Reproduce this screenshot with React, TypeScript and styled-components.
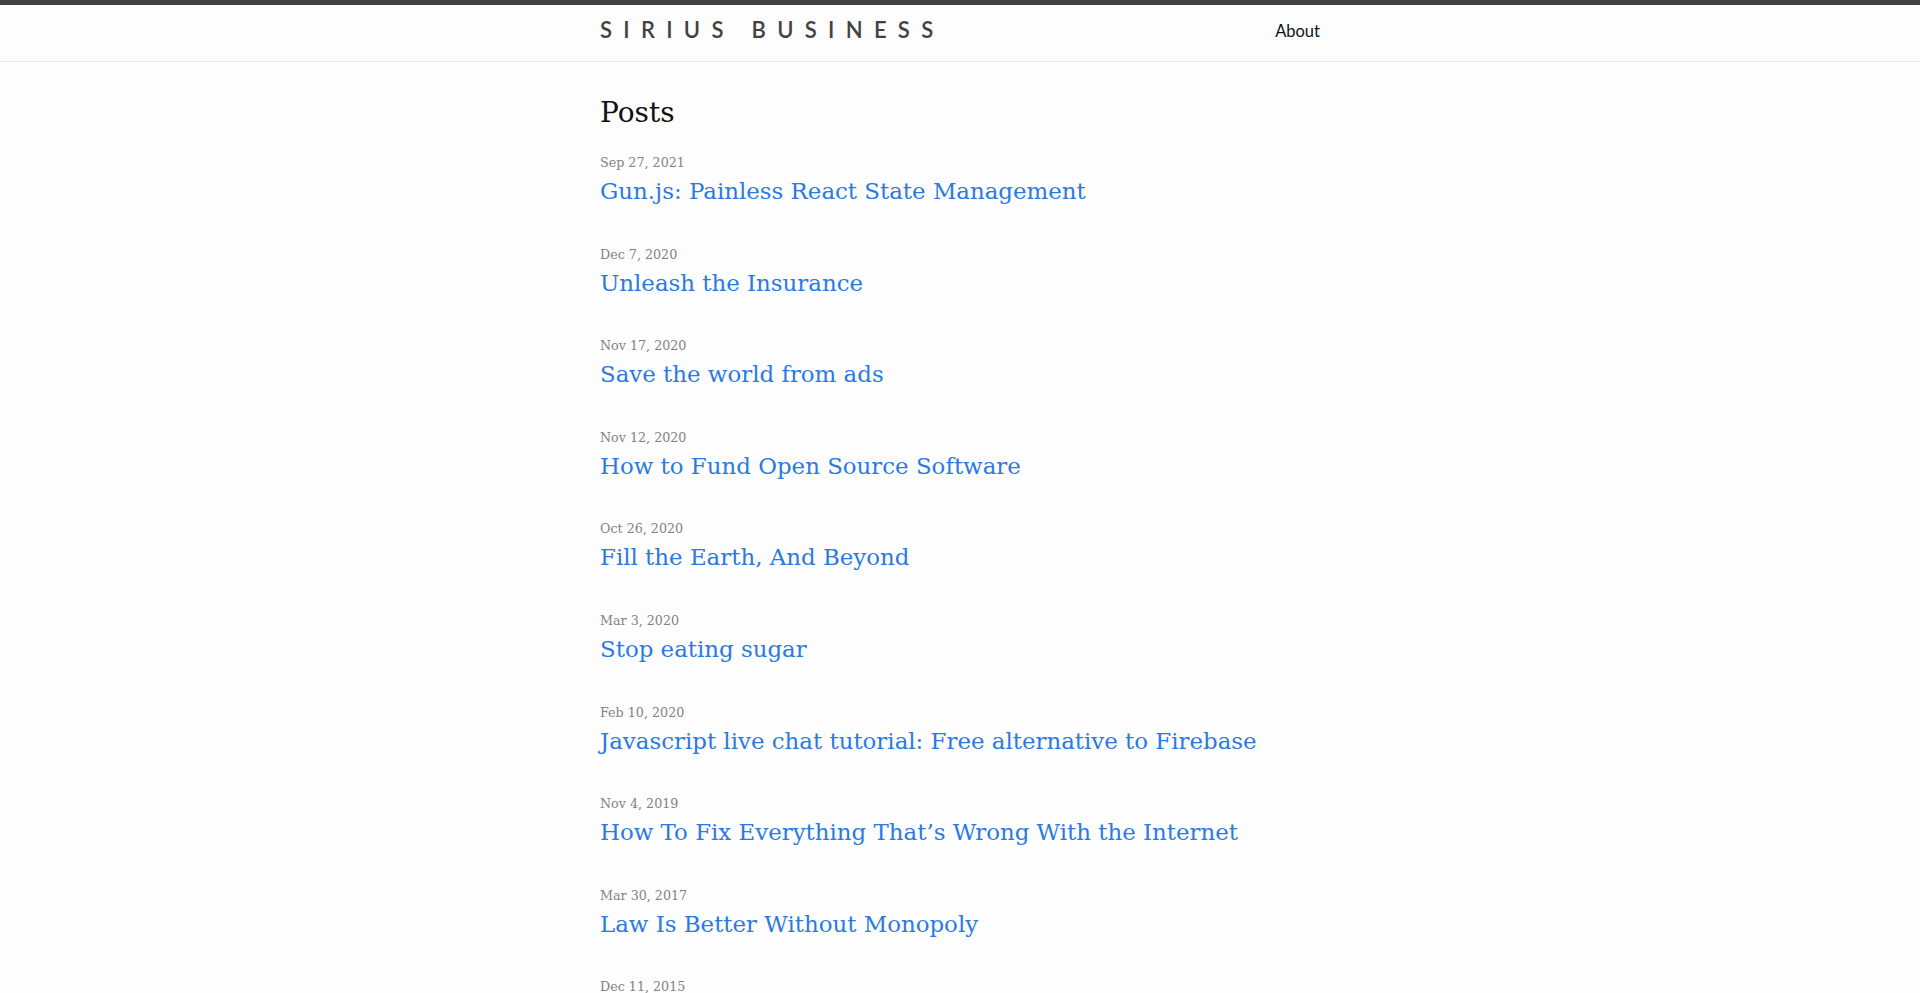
import React from "react";
import styled, { createGlobalStyle } from "styled-components";

const Global = createGlobalStyle`
  html, body { margin: 0; padding: 0; }
  body {
    background: #fdfdfd;
    color: #111111;
    font-family: "DejaVu Serif", "Liberation Serif", serif;
    -webkit-font-smoothing: antialiased;
  }
`;

const Header = styled.header`
  border-top: 5px solid #424242;
  border-bottom: 1px solid #e8e8e8;
  min-height: 56px;
  box-sizing: border-box;
`;

const Wrapper = styled.div`
  max-width: 720px;
  margin: 0 auto;
  padding: 0 30px;
`;

const HeaderRow = styled(Wrapper)`
  display: flex;
  align-items: center;
  justify-content: space-between;
  height: 56px;
`;

const SiteTitle = styled.a`
  font-family: Lato, "Open Sans", sans-serif;
  font-size: 22px;
  font-weight: 600;
  letter-spacing: 11.3px;
  text-transform: uppercase;
  color: #424242;
  text-decoration: none;
  line-height: 50px;
  margin-bottom: 6px;
`;

const Nav = styled.nav`
  display: flex;
  gap: 20px;
  margin-bottom: 5px;
`;

const NavLink = styled.a`
  font-family: Lato, "Open Sans", sans-serif;
  font-size: 16.5px;
  color: #111111;
  text-decoration: none;
  line-height: 24px;
`;

const Main = styled.main`
  padding: 30px 0;
`;

const Heading = styled.h2`
  font-size: 28px;
  font-weight: 400;
  margin: 0 0 18px;
  line-height: 42px;
  color: #111111;
`;

const PostList = styled.ul`
  list-style: none;
  margin: 0;
  padding: 0;
  display: flex;
  flex-direction: column;
  gap: 33.6px;
`;

const Item = styled.li`
  display: flex;
  flex-direction: column;
`;

const Meta = styled.span`
  font-size: 12.7px;
  color: #828282;
  line-height: 21px;
`;

const Title = styled.h3`
  margin: 0;
  font-size: 22.9px;
  font-weight: 400;
  line-height: 37px;
`;

const PostLink = styled.a`
  color: #2a7ae2;
  text-decoration: none;
`;

const posts: [string, string | null][] = [
  ["Sep 27, 2021", "Gun.js: Painless React State Management"],
  ["Dec 7, 2020", "Unleash the Insurance"],
  ["Nov 17, 2020", "Save the world from ads"],
  ["Nov 12, 2020", "How to Fund Open Source Software"],
  ["Oct 26, 2020", "Fill the Earth, And Beyond"],
  ["Mar 3, 2020", "Stop eating sugar"],
  ["Feb 10, 2020", "Javascript live chat tutorial: Free alternative to Firebase"],
  ["Nov 4, 2019", "How To Fix Everything That\u2019s Wrong With the Internet"],
  ["Mar 30, 2017", "Law Is Better Without Monopoly"],
  ["Dec 11, 2015", null],
];

export default function App() {
  return (
    <>
      <Global />
      <Header>
        <HeaderRow>
          <SiteTitle href="#">Sirius Business</SiteTitle>
          <Nav>
            <NavLink href="#">About</NavLink>
          </Nav>
        </HeaderRow>
      </Header>
      <Main>
        <Wrapper>
          <Heading>Posts</Heading>
          <PostList>
            {posts.map(([d, t]) => (
              <Item key={d}>
                <Meta>{d}</Meta>
                {t && (
                  <Title>
                    <PostLink href="#">{t}</PostLink>
                  </Title>
                )}
              </Item>
            ))}
          </PostList>
        </Wrapper>
      </Main>
    </>
  );
}
